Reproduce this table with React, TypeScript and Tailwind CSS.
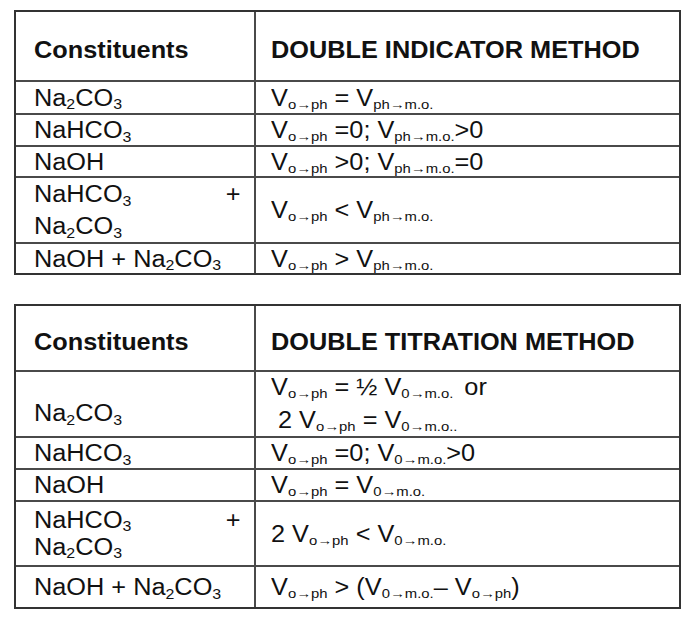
import type { ReactNode } from "react";

const font = { fontFamily: '"Liberation Sans", Arial, sans-serif' };

// the source picture is stretched sideways, so text gets a small x-scale
const T = ({ children, right }: { children: ReactNode; right?: boolean }) => (
  <span
    className={
      right
        ? "inline-block origin-right scale-x-[1.1] whitespace-nowrap"
        : "inline-block origin-left scale-x-[1.1] whitespace-nowrap"
    }
  >
    {children}
  </span>
);

const S = ({ children }: { children: ReactNode }) => (
  <sub className="text-[13.5px]">{children}</sub>
);
const N = ({ children }: { children: ReactNode }) => (
  <sub className="text-[14.5px]">{children}</sub>
);

const Vo = () => (
  <>
    V<S>o→ph</S>
  </>
);
const Vp = () => (
  <>
    V<S>ph→m.o.</S>
  </>
);
const V0 = ({ end = "" }: { end?: string }) => (
  <>
    V<S>0→m.o.{end}</S>
  </>
);

const Na2CO3 = () => (
  <>
    Na<N>2</N>CO<N>3</N>
  </>
);
const NaHCO3 = () => (
  <>
    NaHCO<N>3</N>
  </>
);

const Mixed = ({ lead }: { lead: string }) => (
  <div className={`w-full pr-[14px] ${lead}`}>
    <div className="flex justify-between">
      <T>
        <NaHCO3 />
      </T>
      <T right>+</T>
    </div>
    <div>
      <T>
        <Na2CO3 />
      </T>
    </div>
  </div>
);

type RowProps = {
  h: string;
  left: ReactNode;
  right: ReactNode;
  first?: boolean;
  leftCls?: string;
  rightCls?: string;
};

const Row = ({ h, left, right, first, leftCls = "", rightCls = "" }: RowProps) => (
  <div className={`flex ${h} ${first ? "" : "border-t-2 border-[#4a4a4a]"}`}>
    <div className={`flex w-[240px] shrink-0 items-center border-r-2 border-[#4a4a4a] pl-[18px] ${leftCls}`}>
      {left}
    </div>
    <div className={`flex flex-1 items-center pl-[15px] ${rightCls}`}>{right}</div>
  </div>
);

const Header = ({ h, title }: { h: string; title: string }) => (
  <Row
    first
    h={h}
    leftCls="pt-2 font-bold"
    rightCls="pt-2 font-bold"
    left={<T>Constituents</T>}
    right={<T>{title}</T>}
  />
);

export default function App() {
  return (
    <div className="min-h-[622px] w-[700px] bg-white pl-[14px] pt-[10px] text-[23px] leading-[32px] text-[#111]" style={font}>
      {/* double indicator */}
      <div className="w-[667px] border-2 border-[#333]">
        <Header h="h-[68px]" title="DOUBLE INDICATOR METHOD" />
        <Row
          h="h-[33px]"
          left={<T><Na2CO3 /></T>}
          right={<T><Vo /> = <Vp /></T>}
        />
        <Row
          h="h-[32px]"
          left={<T><NaHCO3 /></T>}
          right={<T><Vo /> =0; <Vp />&gt;0</T>}
        />
        <Row
          h="h-[31px]"
          left={<T>NaOH</T>}
          right={<T><Vo /> &gt;0; <Vp />=0</T>}
        />
        <Row
          h="h-[66px]"
          left={<Mixed lead="leading-[32px]" />}
          right={<T><Vo /> &lt; <Vp /></T>}
        />
        <Row
          h="h-[31px]"
          left={<T>NaOH + <Na2CO3 /></T>}
          right={<T><Vo /> &gt; <Vp /></T>}
        />
      </div>

      {/* double titration */}
      <div className="mt-[29px] w-[667px] border-2 border-[#333]">
        <Header h="h-[64px]" title="DOUBLE TITRATION METHOD" />
        <Row
          h="h-[66px]"
          leftCls="pt-[18px]"
          left={<T><Na2CO3 /></T>}
          right={
            <div className="leading-[33px]">
              <div>
                <T>
                  <Vo /> = ½ <V0 />
                  <span className="ml-[10px]">or</span>
                </T>
              </div>
              <div className="pl-[7px]">
                <T>
                  2 <Vo /> = <V0 end="." />
                </T>
              </div>
            </div>
          }
        />
        <Row
          h="h-[32px]"
          left={<T><NaHCO3 /></T>}
          right={<T><Vo /> =0; <V0 />&gt;0</T>}
        />
        <Row
          h="h-[32px]"
          left={<T>NaOH</T>}
          right={<T><Vo /> = <V0 /></T>}
        />
        <Row
          h="h-[65px]"
          left={<Mixed lead="leading-[27px]" />}
          right={<T>2 <Vo /> &lt; <V0 /></T>}
        />
        <Row
          h="h-[42px]"
          left={<T>NaOH + <Na2CO3 /></T>}
          right={<T><Vo /> &gt; (<V0 />– <Vo />)</T>}
        />
      </div>
    </div>
  );
}
